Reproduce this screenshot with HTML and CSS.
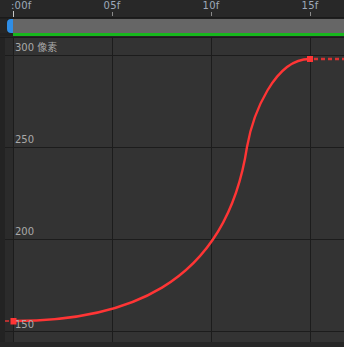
FILE: index.html
```html
<!DOCTYPE html>
<html>
<head>
<meta charset="utf-8">
<link rel="stylesheet" href="styles.css">
</head>
<body>
<div class="app">
  <div class="ruler">
    <div class="cell first"><span class="lbl">:00f</span><i class="tick play"></i></div>
    <div class="cell"><span class="lbl">05f</span><i class="tick"></i></div>
    <div class="cell"><span class="lbl">10f</span><i class="tick"></i></div>
    <div class="cell"><span class="lbl">15f</span><i class="tick"></i></div>
  </div>
  <div class="bar-row">
    <div class="bar-gap"></div>
    <div class="handle"></div>
    <div class="bar"></div>
  </div>
  <div class="green-row"><div class="green-gap"></div><div class="green"></div></div>
  <div class="sep"></div>
  <div class="graph-row">
    <div class="edge"></div>
    <div class="graph">
      <svg class="canvas" width="339" height="304" viewBox="0 0 339 304">
        <rect x="0" y="0" width="8" height="304" fill="#2b2b2b"/>
        <g stroke="#1c1c1c" stroke-width="1">
          <line x1="0" y1="17.5" x2="339" y2="17.5"/>
          <line x1="0" y1="109.5" x2="339" y2="109.5"/>
          <line x1="0" y1="201.5" x2="339" y2="201.5"/>
          <line x1="0" y1="293.5" x2="339" y2="293.5"/>
          <line x1="8.5" y1="0" x2="8.5" y2="304"/>
          <line x1="107.5" y1="0" x2="107.5" y2="304"/>
          <line x1="206.5" y1="0" x2="206.5" y2="304"/>
          <line x1="305.5" y1="0" x2="305.5" y2="304"/>
        </g>
        <line x1="0" y1="283" x2="4" y2="283" stroke="#e03535" stroke-width="1.5"/>
        <line x1="309" y1="21" x2="339" y2="21" stroke="#d83232" stroke-width="2.5" stroke-dasharray="4 3"/>
        <path d="M8.5 283 C115 283 220 252 242 109 C248 75 270 21 304.5 21" fill="none" stroke="#ff3535" stroke-width="2.4"/>
        <rect x="5.5" y="280" width="6" height="6.5" fill="#ff3535"/>
        <rect x="302" y="18" width="6" height="6" fill="#ff3535"/>
      </svg>
      <span class="val v300">300 像素</span>
      <span class="val v250">250</span>
      <span class="val v200">200</span>
      <span class="val v150">150</span>
    </div>
  </div>
  <div class="bottom"></div>
</div>
</body>
</html>
```

FILE: styles.css
```css
* { box-sizing: border-box; }
html, body { margin: 0; padding: 0; background: #262626; }
body { width: 344px; height: 347px; overflow: hidden; font-family: "DejaVu Sans", "Noto Sans CJK SC", sans-serif; }
.app { width: 344px; height: 347px; display: flex; flex-direction: column; background: #262626; }

.ruler { height: 17px; display: flex; padding-left: 13px; background: #282828; overflow: hidden; }
.cell { width: 99px; flex: none; position: relative; display: flex; flex-direction: column; }
.lbl { font-size: 10px; line-height: 12px; color: #9ea8ba; transform: translateX(-50%); align-self: flex-start; white-space: nowrap; letter-spacing: 0.2px; }
.first .lbl { transform: translateX(-2px); }
.tick { display: block; width: 1px; height: 4px; margin-top: 0; background: #8a8a8a; }
.tick.play { height: 6px; margin-top: -1px; background: #c8c8c8; }

.bar-row { height: 16px; display: flex; border-top: 1px solid #1a1a1a; padding-top: 1px; background: #1f1f1f; }
.bar-gap { width: 7px; background: #262626; }
.handle { width: 6px; background: #2f8ee6; border-radius: 4px 0 0 4px; }
.bar { flex: 1; background: #666666; }

.green-row { height: 3px; display: flex; }
.green-gap { width: 13px; background: #222; }
.green { flex: 1; background: #17b71d; }

.sep { height: 2px; border-bottom: 1px solid #1b1b1b; background: #262626; }

.graph-row { height: 304px; display: flex; }
.edge { width: 5px; background: #232323; }
.graph { flex: 1; position: relative; background: #333333; }
.canvas { display: block; }
.val { position: absolute; left: 10px; font-size: 10px; line-height: 12px; color: #a9a9a9; white-space: nowrap; }
.v300 { top: 4px; }
.v250 { top: 96px; }
.v200 { top: 188px; }
.v150 { top: 281px; }

.bottom { flex: 1; background: #262626; }
```
